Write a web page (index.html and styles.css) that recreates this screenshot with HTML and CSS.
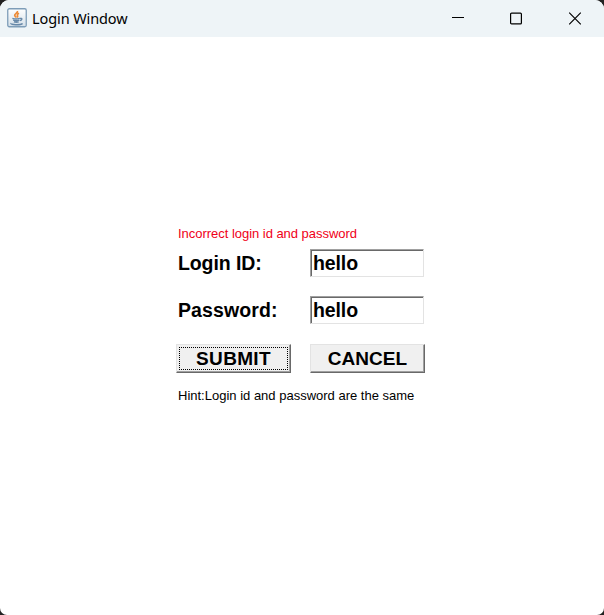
FILE: index.html
```html
<!DOCTYPE html>
<html lang="en">
<head>
<meta charset="utf-8">
<title>Login Window</title>
<link rel="stylesheet" href="styles.css">
</head>
<body>
<div class="window">
  <header class="titlebar">
    <svg class="app-icon" width="20" height="20" viewBox="0 0 20 20" fill="none">
      <defs><linearGradient id="tile" x1="0" y1="0" x2="0" y2="1"><stop stop-color="#fff"/><stop offset="1" stop-color="#d3dfe8"/></linearGradient></defs>
      <rect x=".75" y=".75" width="18.5" height="18" rx="1.5" fill="url(#tile)" stroke="#7e9db8" stroke-width="1.3"/>
      <path d="M10.4 3C11.3 5 7.4 5.6 7.7 7.4c.1 1 1.2 1.4 1.4 2.2M12 5.2C9.8 6.4 10.2 7 10.6 7.8c.3.7-.1 1.3-.4 1.7" stroke="#ed8a35" stroke-width="1.7"/>
      <path d="M5.4 10.4c2 .7 5.4.6 7.4 0M6.2 12.2c1.8.7 4.4.6 6.2 0M6.9 13.8c1.5.5 3.4.5 4.8 0M13 10.5c2.5-.8 2.5 1.5 0 2.2M4 15.2c-1 1.8 9.4 2.2 11.6.2" stroke="#6788a8" stroke-width="1.4"/>
    </svg>
    <h1 class="title">Login Window</h1>
    <div class="controls">
      <svg width="14" height="14" viewBox="0 0 14 14"><path d="M2 5.5h12" stroke="#000"/></svg>
      <svg width="14" height="14" viewBox="0 0 14 14"><rect x="1.6" y="1.1" width="10.8" height="10.8" rx="1" fill="none" stroke="#000" stroke-width="1.2"/></svg>
      <svg width="14" height="14" viewBox="0 0 14 14"><path d="M1.2.7l11.6 11.6M12.8.7L1.2 12.3" stroke="#000" stroke-width="1.2"/></svg>
    </div>
  </header>
  <form class="login">
    <p class="message error">Incorrect login id and password</p>
    <label class="label" for="login">Login ID:</label>
    <input class="field" id="login" type="text" value="hello">
    <label class="label wide" for="password">Password:</label>
    <input class="field" id="password" type="text" value="hello">
    <button class="button focused" type="button">SUBMIT</button>
    <button class="button" type="button">CANCEL</button>
    <p class="message hint">Hint:Login id and password are the same</p>
  </form>
</div>
</body>
</html>
```
FILE: styles.css
```css
* { box-sizing: border-box; }
body { margin: 0; background: #222; font-family: "Liberation Sans", Arial, sans-serif; color: #000; }
.window { width: 604px; height: 615px; background: #fff; border-radius: 9px 9px 7px 7px; overflow: hidden; }
.titlebar { height: 37px; padding-left: 7px; display: flex; align-items: center; background: #eef4f7; }
.app-icon { margin-top: -1px; }
.title { margin: -2px 0 0 5px; font: 400 14.5px/20px "Noto Sans", sans-serif; letter-spacing: -0.1px; }
.controls { display: flex; gap: 45px; margin-left: auto; padding-right: 22px; }
.controls svg { display: block; }
.login { margin: 188px 0 0 177px; display: grid; grid-template-columns: 114px 115px; column-gap: 19px; grid-template-rows: 24px 47px 48px 31px 30px; }
.message { grid-column: 1 / -1; margin: 0; padding-left: 1px; font-size: 13px; line-height: 17px; white-space: nowrap; }
.error { color: #f00018; letter-spacing: -0.03px; }
.hint { padding-top: 12px; }
.label { padding-left: 1px; font-size: 19.5px; font-weight: 700; line-height: 28px; letter-spacing: -0.1px; }
.wide { letter-spacing: 0.1px; }
.field { width: 114px; height: 28px; padding: 1px 1px 1px 2px; font: 700 19.5px/24px "Liberation Sans", Arial, sans-serif; letter-spacing: -0.1px; color: #000; background: #fff; border: 1px solid; border-color: #a0a0a0 #e3e3e3 #e3e3e3 #a0a0a0; border-radius: 0; outline: 0; box-shadow: inset 1px 1px #696969; }
.button { height: 29px; padding: 0; font: 700 19px/24px "Liberation Sans", Arial, sans-serif; letter-spacing: 0.05px; color: #000; background: #f0f0f0; border: 1px solid; border-color: #e3e3e3 #696969 #696969 #e3e3e3; border-radius: 0; box-shadow: inset -1px -1px #a0a0a0; }
.focused { margin-left: -1px; letter-spacing: 0.35px; outline: 1px dotted #000; outline-offset: -4px; }
```
